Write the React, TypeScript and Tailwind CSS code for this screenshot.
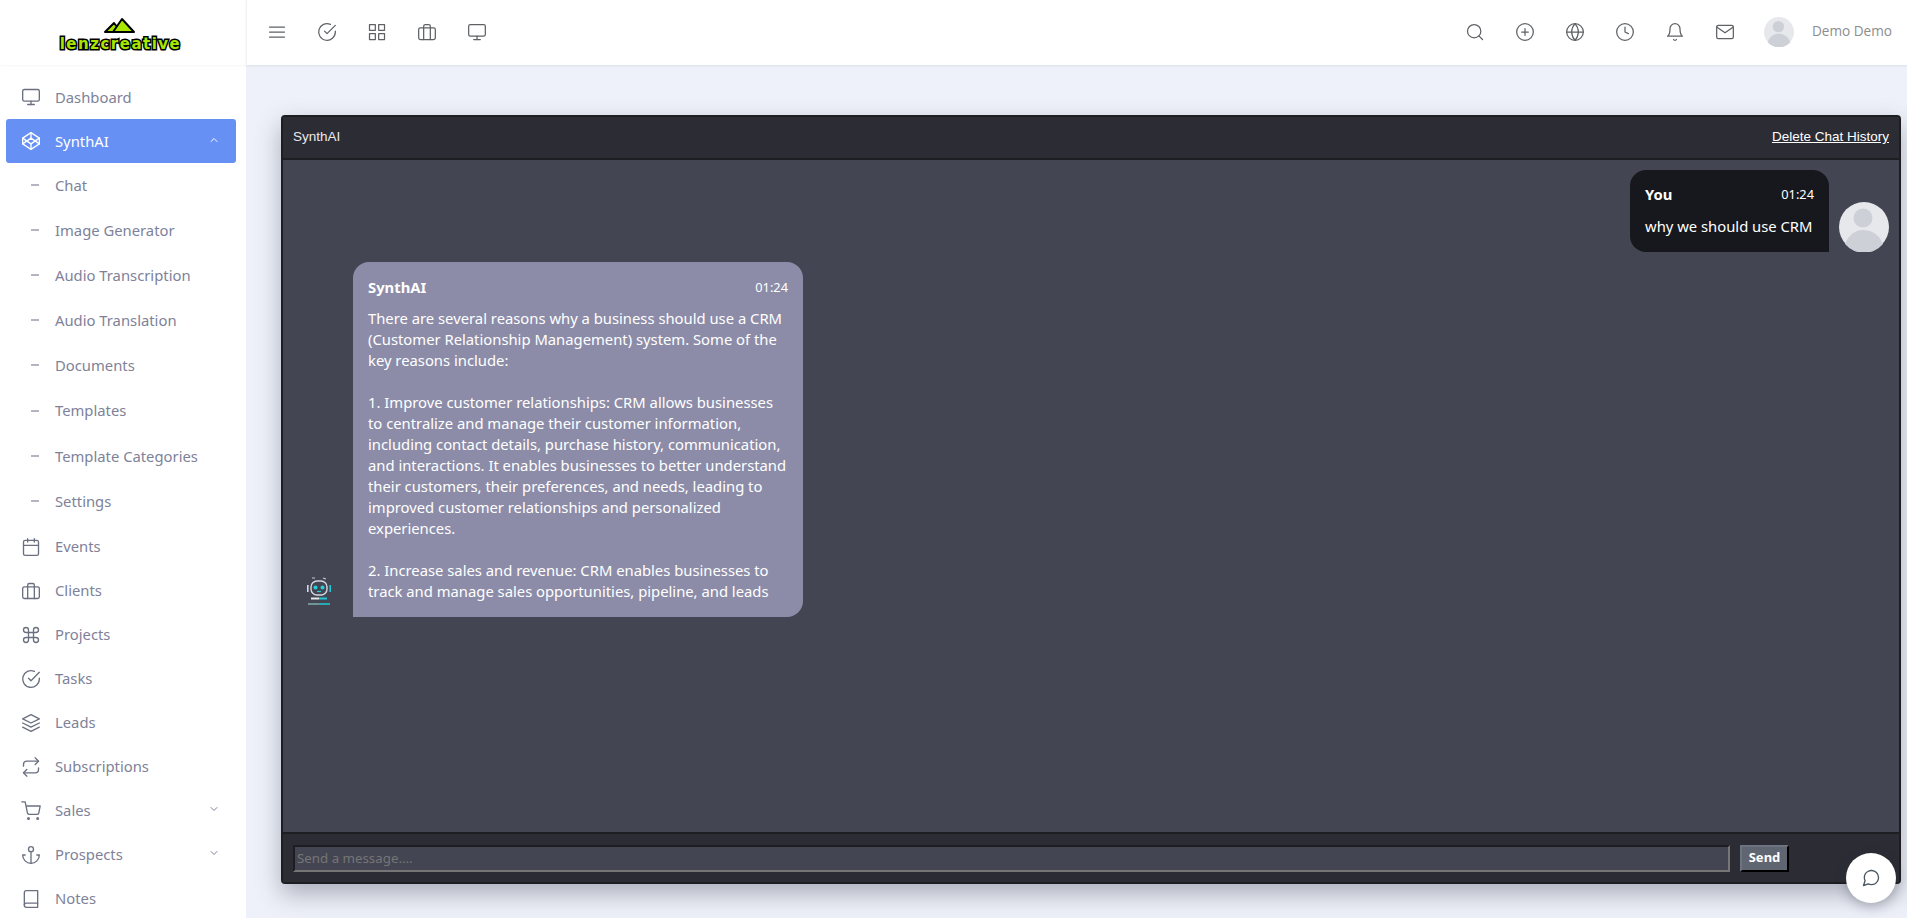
import type { ComponentType } from 'react';
import {
  FiAnchor, FiBell, FiBook, FiBriefcase, FiCalendar, FiCheckCircle, FiChevronDown, FiChevronUp, FiClock,
  FiCodepen, FiCommand, FiGlobe, FiGrid, FiLayers, FiMail, FiMenu, FiMessageCircle, FiMonitor, FiPlusCircle,
  FiRepeat, FiSearch, FiShoppingCart,
} from 'react-icons/fi';

type Icon = ComponentType<{ size?: number; strokeWidth?: number; className?: string }>;

const subItems = ['Chat', 'Image Generator', 'Audio Transcription', 'Audio Translation', 'Documents', 'Templates', 'Template Categories', 'Settings'];

const bottomItems: { label: string; icon: Icon; arrow?: boolean }[] = [
  { label: 'Events', icon: FiCalendar },
  { label: 'Clients', icon: FiBriefcase },
  { label: 'Projects', icon: FiCommand },
  { label: 'Tasks', icon: FiCheckCircle },
  { label: 'Leads', icon: FiLayers },
  { label: 'Subscriptions', icon: FiRepeat },
  { label: 'Sales', icon: FiShoppingCart, arrow: true },
  { label: 'Prospects', icon: FiAnchor, arrow: true },
  { label: 'Notes', icon: FiBook },
];

const headerLeft: Icon[] = [FiMenu, FiCheckCircle, FiGrid, FiBriefcase, FiMonitor];
const headerRight: Icon[] = [FiSearch, FiPlusCircle, FiGlobe, FiClock, FiBell, FiMail];

function Logo() {
  return (
    <div className="flex flex-col items-center pt-[3px]">
      <svg width="34" height="17" viewBox="0 0 34 17">
        <path d="M2 15 L11 6 L18 15 Z" fill="#a8e600" stroke="#000" strokeWidth="2" strokeLinejoin="round" />
        <path d="M10 15 L19 2 L31 15 Z" fill="#a8e600" stroke="#000" strokeWidth="2" strokeLinejoin="round" />
      </svg>
      <span className="mt-[2px] font-['DejaVu_Sans'] text-[15px] leading-[16px] font-bold tracking-[1.5px] text-[#a8e600] [-webkit-text-stroke:3px_#000] [paint-order:stroke_fill]">
        lenzcreative
      </span>
    </div>
  );
}

function Avatar({ size }: { size: string }) {
  return (
    <svg viewBox="0 0 50 50" className={size}>
      <circle cx="25" cy="25" r="25" fill="#e6e8ec" />
      <circle cx="24" cy="16" r="9.5" fill="#cdd1d7" />
      <path d="M6 42 C10 32 17 28 24 28 C32 28 40 32 44 42 A25 25 0 0 1 6 42 Z" fill="#cdd1d7" />
    </svg>
  );
}

function BotIcon() {
  return (
    <svg width="26" height="30" viewBox="0 0 26 30" fill="none">
      <path d="M6 1 h3 M17 1 l3 1" stroke="#c8ccd6" strokeWidth="1.2" />
      <rect x="5" y="4" width="16" height="14" rx="6" stroke="#d5d8e0" strokeWidth="1.4" />
      <rect x="1" y="8" width="1.6" height="7" fill="#d5d8e0" />
      <rect x="23.4" y="8" width="1.6" height="7" fill="#22c7d6" />
      <circle cx="9.5" cy="10.5" r="2" fill="#25d0d6" />
      <circle cx="16.5" cy="10.5" r="2" fill="#25d0d6" />
      <path d="M11 14.5 h4" stroke="#25d0d6" strokeWidth="1.2" />
      <path d="M5 21.5 h8" stroke="#e4e6ec" strokeWidth="2" />
      <path d="M13 21.5 h8" stroke="#22c7d6" strokeWidth="2" />
      <path d="M2 27 h11" stroke="#7fa8a8" strokeWidth="1.6" />
      <path d="M13 27 h11" stroke="#20c5cc" strokeWidth="1.6" />
    </svg>
  );
}

function Sidebar() {
  return (
    <aside className="flex h-full w-[246px] shrink-0 flex-col overflow-hidden bg-white text-[14.8px] text-[#7e8299]">
      <div className="flex h-[65px] shrink-0 items-center justify-center pr-[5px] shadow-[0_1px_2px_rgba(0,0,0,0.04)]">
        <Logo />
      </div>
      <nav className="flex flex-col pt-[10px] pl-[6px] pr-[10px]">
        <a className="flex h-[44px] shrink-0 items-center pl-[15px]">
          <FiMonitor size={20} strokeWidth={1.6} className="text-[#6b7080]" />
          <span className="ml-[14px]">Dashboard</span>
        </a>
        <a className="flex h-[44px] shrink-0 items-center rounded-[3px] bg-[#6690f4] pl-[15px] pr-[16px] text-white">
          <FiCodepen size={20} strokeWidth={1.6} />
          <span className="ml-[14px]">SynthAI</span>
          <FiChevronUp size={12} strokeWidth={2} className="mt-[-2px] ml-auto" />
        </a>
        {subItems.map((item) => (
          <a key={item} className="flex h-[45.2px] shrink-0 items-center pb-[2px] pl-[25px]">
            <span className="h-[2px] w-[8px] bg-[#b3b5c1]" />
            <span className="ml-[16px]">{item}</span>
          </a>
        ))}
        {bottomItems.map(({ label, icon: Ico, arrow }) => (
          <a key={label} className="flex h-[44px] shrink-0 items-center pl-[15px] pr-[16px]">
            <Ico size={20} strokeWidth={1.6} className="text-[#6b7080]" />
            <span className="ml-[14px]">{label}</span>
            {arrow && <FiChevronDown size={12} strokeWidth={2} className="mt-[-4px] ml-auto" />}
          </a>
        ))}
      </nav>
    </aside>
  );
}

function Header() {
  return (
    <header className="flex h-[65px] shrink-0 items-center justify-between border-l border-[#f2f2f4] bg-white pb-[1px] pl-[20px] pr-[15px] shadow-[0_1px_2px_rgba(0,0,0,0.08)]">
      <div className="flex items-center gap-[30px]">
        {headerLeft.map((Ico, i) => (
          <Ico key={i} size={20} strokeWidth={1.5} className="text-[#5f6165]" />
        ))}
      </div>
      <div className="flex items-center">
        <div className="flex items-center gap-[30px]">
          {headerRight.map((Ico, i) => (
            <Ico key={i} size={20} strokeWidth={1.5} className="text-[#5f6165]" />
          ))}
        </div>
        <div className="ml-[29px]">
          <Avatar size="block h-[30px] w-[30px]" />
        </div>
        <span className="ml-[18px] pb-[2px] font-['Open_Sans'] text-[13.6px] text-[#8d8d8d]">Demo Demo</span>
      </div>
    </header>
  );
}

function ChatCard() {
  return (
    <section className="flex h-[769px] flex-col overflow-hidden rounded-[4px] border-2 border-[#1d1e22] bg-[#434552] shadow-[0_10px_24px_rgba(60,65,85,0.38)]">
      <div className="flex h-[43px] shrink-0 items-center justify-between border-b-2 border-[#1d1e22] bg-[#2c2c35] pl-[10px] pr-[10px] font-['Liberation_Sans'] text-[13.5px] text-[#e9e9ec]">
        <span>SynthAI</span>
        <a className="text-white underline">Delete Chat History</a>
      </div>
      <div className="flex-1 px-[10px] py-[10px] font-['Noto_Sans'] text-[14.8px] leading-[21px] text-white">
        <div className="flex items-end justify-end">
          <div className="w-[199px] rounded-[16px] rounded-br-none bg-[#17181d] px-[15px] pt-[14px] pb-[15px]">
            <div className="flex items-center justify-between">
              <b className="font-bold">You</b>
              <span className="text-[12.8px]">01:24</span>
            </div>
            <p className="mt-[11px]">why we should use CRM</p>
          </div>
          <div className="ml-[10px]">
            <Avatar size="block h-[50px] w-[50px]" />
          </div>
        </div>
        <div className="mt-[10px] flex items-end">
          <div className="ml-[13px] mr-[21px] mb-[10px]">
            <BotIcon />
          </div>
          <div className="w-[450px] rounded-[16px] rounded-bl-none bg-[#8c8ca8] px-[15px] pt-[15px] pb-[15px]">
            <div className="flex items-center justify-between">
              <b className="font-bold">SynthAI</b>
              <span className="text-[12.8px]">01:24</span>
            </div>
            <p className="mt-[10px]">
              There are several reasons why a business should use a CRM (Customer Relationship Management) system. Some of the key reasons include:
              <br />
              <br />
              1. Improve customer relationships: CRM allows businesses to centralize and manage their customer information, including contact details, purchase history, communication, and interactions. It enables businesses to better understand their customers, their preferences, and needs, leading to improved customer relationships and personalized experiences.
              <br />
              <br />
              2. Increase sales and revenue: CRM enables businesses to track and manage sales opportunities, pipeline, and leads
            </p>
          </div>
        </div>
      </div>
      <div className="flex h-[50px] shrink-0 items-center border-t-2 border-[#1d1e22] bg-[#2c2c35] pl-[10px]">
        <input
          placeholder="Send a message...."
          className="h-[27px] w-[1437px] border-2 border-t-[#1d1e22] border-r-[#767676] border-b-[#767676] border-l-[#1d1e22] bg-[#434552] px-[2px] font-['Noto_Sans'] text-[13.3px] text-white outline-none placeholder:text-[#757575]"
        />
        <button className="ml-[10px] h-[27px] w-[49px] border-2 border-t-[#6d7380] border-r-black border-b-black border-l-[#6d7380] bg-[#5f6672] font-['Noto_Sans'] text-[13px] font-bold text-white">
          Send
        </button>
      </div>
    </section>
  );
}

export default function App() {
  return (
    <div className="flex h-screen overflow-hidden bg-[#eef1f9] font-['Noto_Sans',sans-serif]">
      <Sidebar />
      <div className="flex min-w-0 flex-1 flex-col">
        <Header />
        <main className="flex-1 pt-[50px] pl-[35px] pr-[6px]">
          <ChatCard />
        </main>
      </div>
      <button className="fixed right-[11px] bottom-[15px] flex h-[50px] w-[50px] items-center justify-center rounded-full bg-white shadow-[0_4px_12px_rgba(40,45,60,0.3)]">
        <FiMessageCircle size={20} strokeWidth={1.6} className="text-[#4b5563]" />
      </button>
    </div>
  );
}
